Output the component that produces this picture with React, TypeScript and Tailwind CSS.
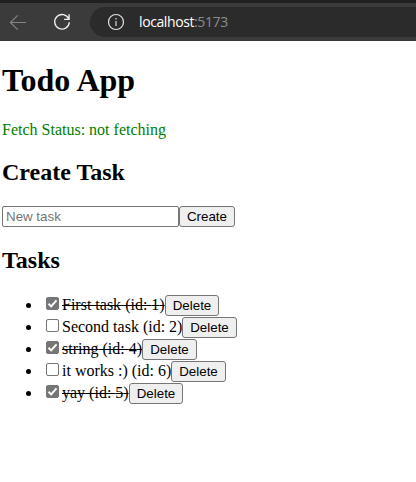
import { useState } from "react";

type Task = { id: number; title: string; done: boolean; width: string; buttonWidth: string };

const initialTasks: Task[] = [
  { id: 1, title: "First task", done: true, width: "w-[103px]", buttonWidth: "w-[54px]" },
  { id: 2, title: "Second task", done: false, width: "w-[120px]", buttonWidth: "w-[55px]" },
  { id: 4, title: "string", done: true, width: "w-[80px]", buttonWidth: "w-[55px]" },
  { id: 6, title: "it works :)", done: false, width: "w-[109px]", buttonWidth: "w-[55px]" },
  { id: 5, title: "yay", done: true, width: "w-[67px]", buttonWidth: "w-[54px]" },
];

const buttonClass =
  "h-[21px] shrink-0 rounded-[3px] border border-[#767676] bg-[#efefef] text-center font-['Liberation_Sans',Arial,sans-serif] text-[13.333px] leading-[19px] text-black";

function BrowserBar() {
  return (
    <header className="flex h-[41px] items-center border-t-[3px] border-b border-t-[#202020] border-b-[#353535] bg-[#3b3b3b]">
      <svg className="ml-[9px] h-[18px] w-[18px] shrink-0" viewBox="0 0 18 18" fill="none" stroke="#858585" strokeWidth="1.15">
        <path d="M17 9.5H1.4M8.7 2.3 1.4 9.5l7.3 7.2" />
      </svg>
      <svg className="ml-[26px] h-[18px] w-[18px] shrink-0" viewBox="0 0 18 18" fill="none" stroke="#eeeeee" strokeWidth="1.35">
        <path d="M15.8 6.1A7.3 7.3 0 1 0 16.3 9.3M16.1 1.3v5h-5" />
      </svg>
      <div className="ml-[19px] flex h-[30px] flex-1 items-center rounded-l-[15px] bg-[#2b2b2b]">
        <svg className="ml-[17px] h-[18px] w-[18px] shrink-0" viewBox="0 0 18 18" fill="none">
          <circle cx="9" cy="9" r="7.5" stroke="#e2e2e2" strokeWidth="1.2" />
          <path d="M9 8v5M9 5v1.6" stroke="#b0b0b0" strokeWidth="1.6" />
        </svg>
        <span className="ml-[14px] font-['Open_Sans','Noto_Sans',sans-serif] text-[14px] leading-[20px] tracking-[-0.4px] text-white">
          localhost<span className="text-[#8b8b8b]">:5173</span>
        </span>
      </div>
    </header>
  );
}

function Checkbox({ checked, onChange }: { checked: boolean; onChange: () => void }) {
  return (
    <label className="mt-[2px] mr-[3px] grid h-[13px] w-[13px] shrink-0">
      <input
        type="checkbox"
        checked={checked}
        onChange={onChange}
        className="col-start-1 row-start-1 h-[13px] w-[13px] appearance-none rounded-[2px] border border-[#767676] bg-white checked:bg-[#767676]"
      />
      {checked && (
        <svg className="pointer-events-none col-start-1 row-start-1 h-[13px] w-[13px]" viewBox="0 0 13 13" fill="none" stroke="white" strokeWidth="2">
          <path d="m2.5 6.7 2.7 2.7 5.3-6" />
        </svg>
      )}
    </label>
  );
}

export default function App() {
  const [tasks, setTasks] = useState(initialTasks);
  const toggle = (id: number) =>
    setTasks((list) => list.map((t) => (t.id === id ? { ...t, done: !t.done } : t)));
  const remove = (id: number) => setTasks((list) => list.filter((t) => t.id !== id));

  return (
    <div className="h-[482px] w-[416px] overflow-hidden bg-white font-['Liberation_Serif','Times_New_Roman',serif] text-[16px] leading-[18px] text-black">
      <BrowserBar />
      <main className="pl-[2px]">
        <h1 className="pt-[21px] text-[32px] leading-[37px] font-bold">Todo App</h1>
        <p className="mt-[22px] text-[#008000]">Fetch Status: not fetching</p>
        <h2 className="mt-[19px] text-[24px] leading-[28px] font-bold">Create Task</h2>
        <form className="mt-[20px] flex" onSubmit={(e) => e.preventDefault()}>
          <input
            placeholder="New task"
            className="h-[21px] w-[177px] rounded-[2px] border border-[#767676] bg-white px-[3px] font-['Liberation_Sans',Arial,sans-serif] text-[13.333px] leading-[15px] placeholder:text-[#757575]"
          />
          <button className={`${buttonClass} w-[56px]`}>Create</button>
        </form>
        <h2 className="mt-[19px] text-[24px] leading-[28px] font-bold">Tasks</h2>
        <ul className="mt-[21px]">
          {tasks.map((task) => (
            <li key={task.id} className="flex h-[22px] pl-[24px]">
              <span className="mt-[8px] mr-[15px] h-[5px] w-[5px] shrink-0 rounded-full bg-black" />
              <Checkbox checked={task.done} onChange={() => toggle(task.id)} />
              <span className={`mt-[1px] shrink-0 whitespace-nowrap ${task.width} ${task.done ? "line-through" : ""}`}>
                {task.title} (id: {task.id})
              </span>
              <button className={`${buttonClass} ${task.buttonWidth}`} onClick={() => remove(task.id)}>
                Delete
              </button>
            </li>
          ))}
        </ul>
      </main>
    </div>
  );
}
